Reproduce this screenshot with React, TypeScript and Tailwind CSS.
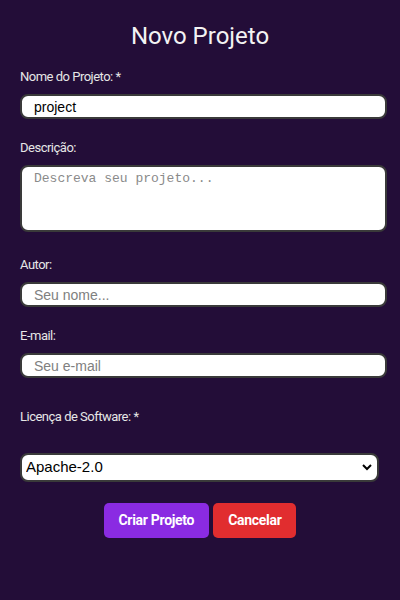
export default function App() {
  return (
    <div className="min-h-[600px] bg-[#230d38] px-5 pt-5 font-['Roboto',sans-serif]">
      <h1 className="text-center text-[24px] leading-8 text-[#f3f3f3]">Novo Projeto</h1>

      <form className="mt-[17px]">
        <label className="block text-[13px] leading-4 tracking-[-0.5px] text-[#e6e6e6]">Nome do Projeto: *</label>
        <input
          defaultValue="project"
          className="mt-[9px] block h-[25px] w-[367px] rounded-lg border-2 border-[#3a3a3a] bg-white px-3 font-['Liberation_Sans',sans-serif] text-[14px] text-black outline-none"
        />

        <label className="mt-[21px] block text-[13px] leading-4 tracking-[-0.5px] text-[#e6e6e6]">Descrição:</label>
        <textarea
          placeholder="Descreva seu projeto..."
          className="mt-[9px] block h-[67px] w-[367px] resize-none rounded-lg border-2 border-[#3a3a3a] bg-white px-3 pt-[2px] font-['Liberation_Mono',monospace] text-[13px] text-black outline-none placeholder:text-[#8a8a8a]"
        />

        <label className="mt-[25px] block text-[13px] leading-4 tracking-[-0.5px] text-[#e6e6e6]">Autor:</label>
        <input
          placeholder="Seu nome..."
          className="mt-[9px] block h-[25px] w-[367px] rounded-lg border-2 border-[#3a3a3a] bg-white px-3 font-['Liberation_Sans',sans-serif] text-[14px] text-black outline-none placeholder:text-[#808080]"
        />

        <label className="mt-[21px] block text-[13px] leading-4 tracking-[-0.5px] text-[#e6e6e6]">E-mail:</label>
        <input
          placeholder="Seu e-mail"
          className="mt-[9px] block h-[25px] w-[367px] rounded-lg border-2 border-[#3a3a3a] bg-white px-3 font-['Liberation_Sans',sans-serif] text-[14px] text-black outline-none placeholder:text-[#808080]"
        />

        <label className="mt-[31px] block text-[13px] leading-4 tracking-[-0.5px] text-[#e6e6e6]">Licença de Software: *</label>
        <div className="relative mt-[28px] w-[359px]">
          <select
            defaultValue="Apache-2.0"
            className="block h-[29px] w-full appearance-none rounded-lg border-2 border-[#3a3a3a] bg-white pl-1 font-['Liberation_Sans',sans-serif] text-[15px] text-black outline-none"
          >
            <option>MIT</option>
            <option>Apache-2.0</option>
            <option>GPL-3.0</option>
          </select>
          <svg
            className="pointer-events-none absolute right-[7px] top-[11px]"
            width="10"
            height="7"
            viewBox="0 0 10 7"
            fill="none"
            stroke="black"
            strokeWidth="2"
          >
            <path d="M1 1l4 4 4-4" />
          </svg>
        </div>

        <div className="mt-[21px] flex justify-center gap-1">
          <button
            type="button"
            className="h-[35px] rounded-[5px] bg-[#8a2be2] px-[15px] text-[14px] font-bold tracking-[-0.3px] text-white"
          >
            Criar Projeto
          </button>
          <button
            type="button"
            className="h-[35px] rounded-[5px] bg-[#e12d2f] px-[15px] text-[14px] font-bold tracking-[-0.3px] text-white"
          >
            Cancelar
          </button>
        </div>
      </form>
    </div>
  );
}
